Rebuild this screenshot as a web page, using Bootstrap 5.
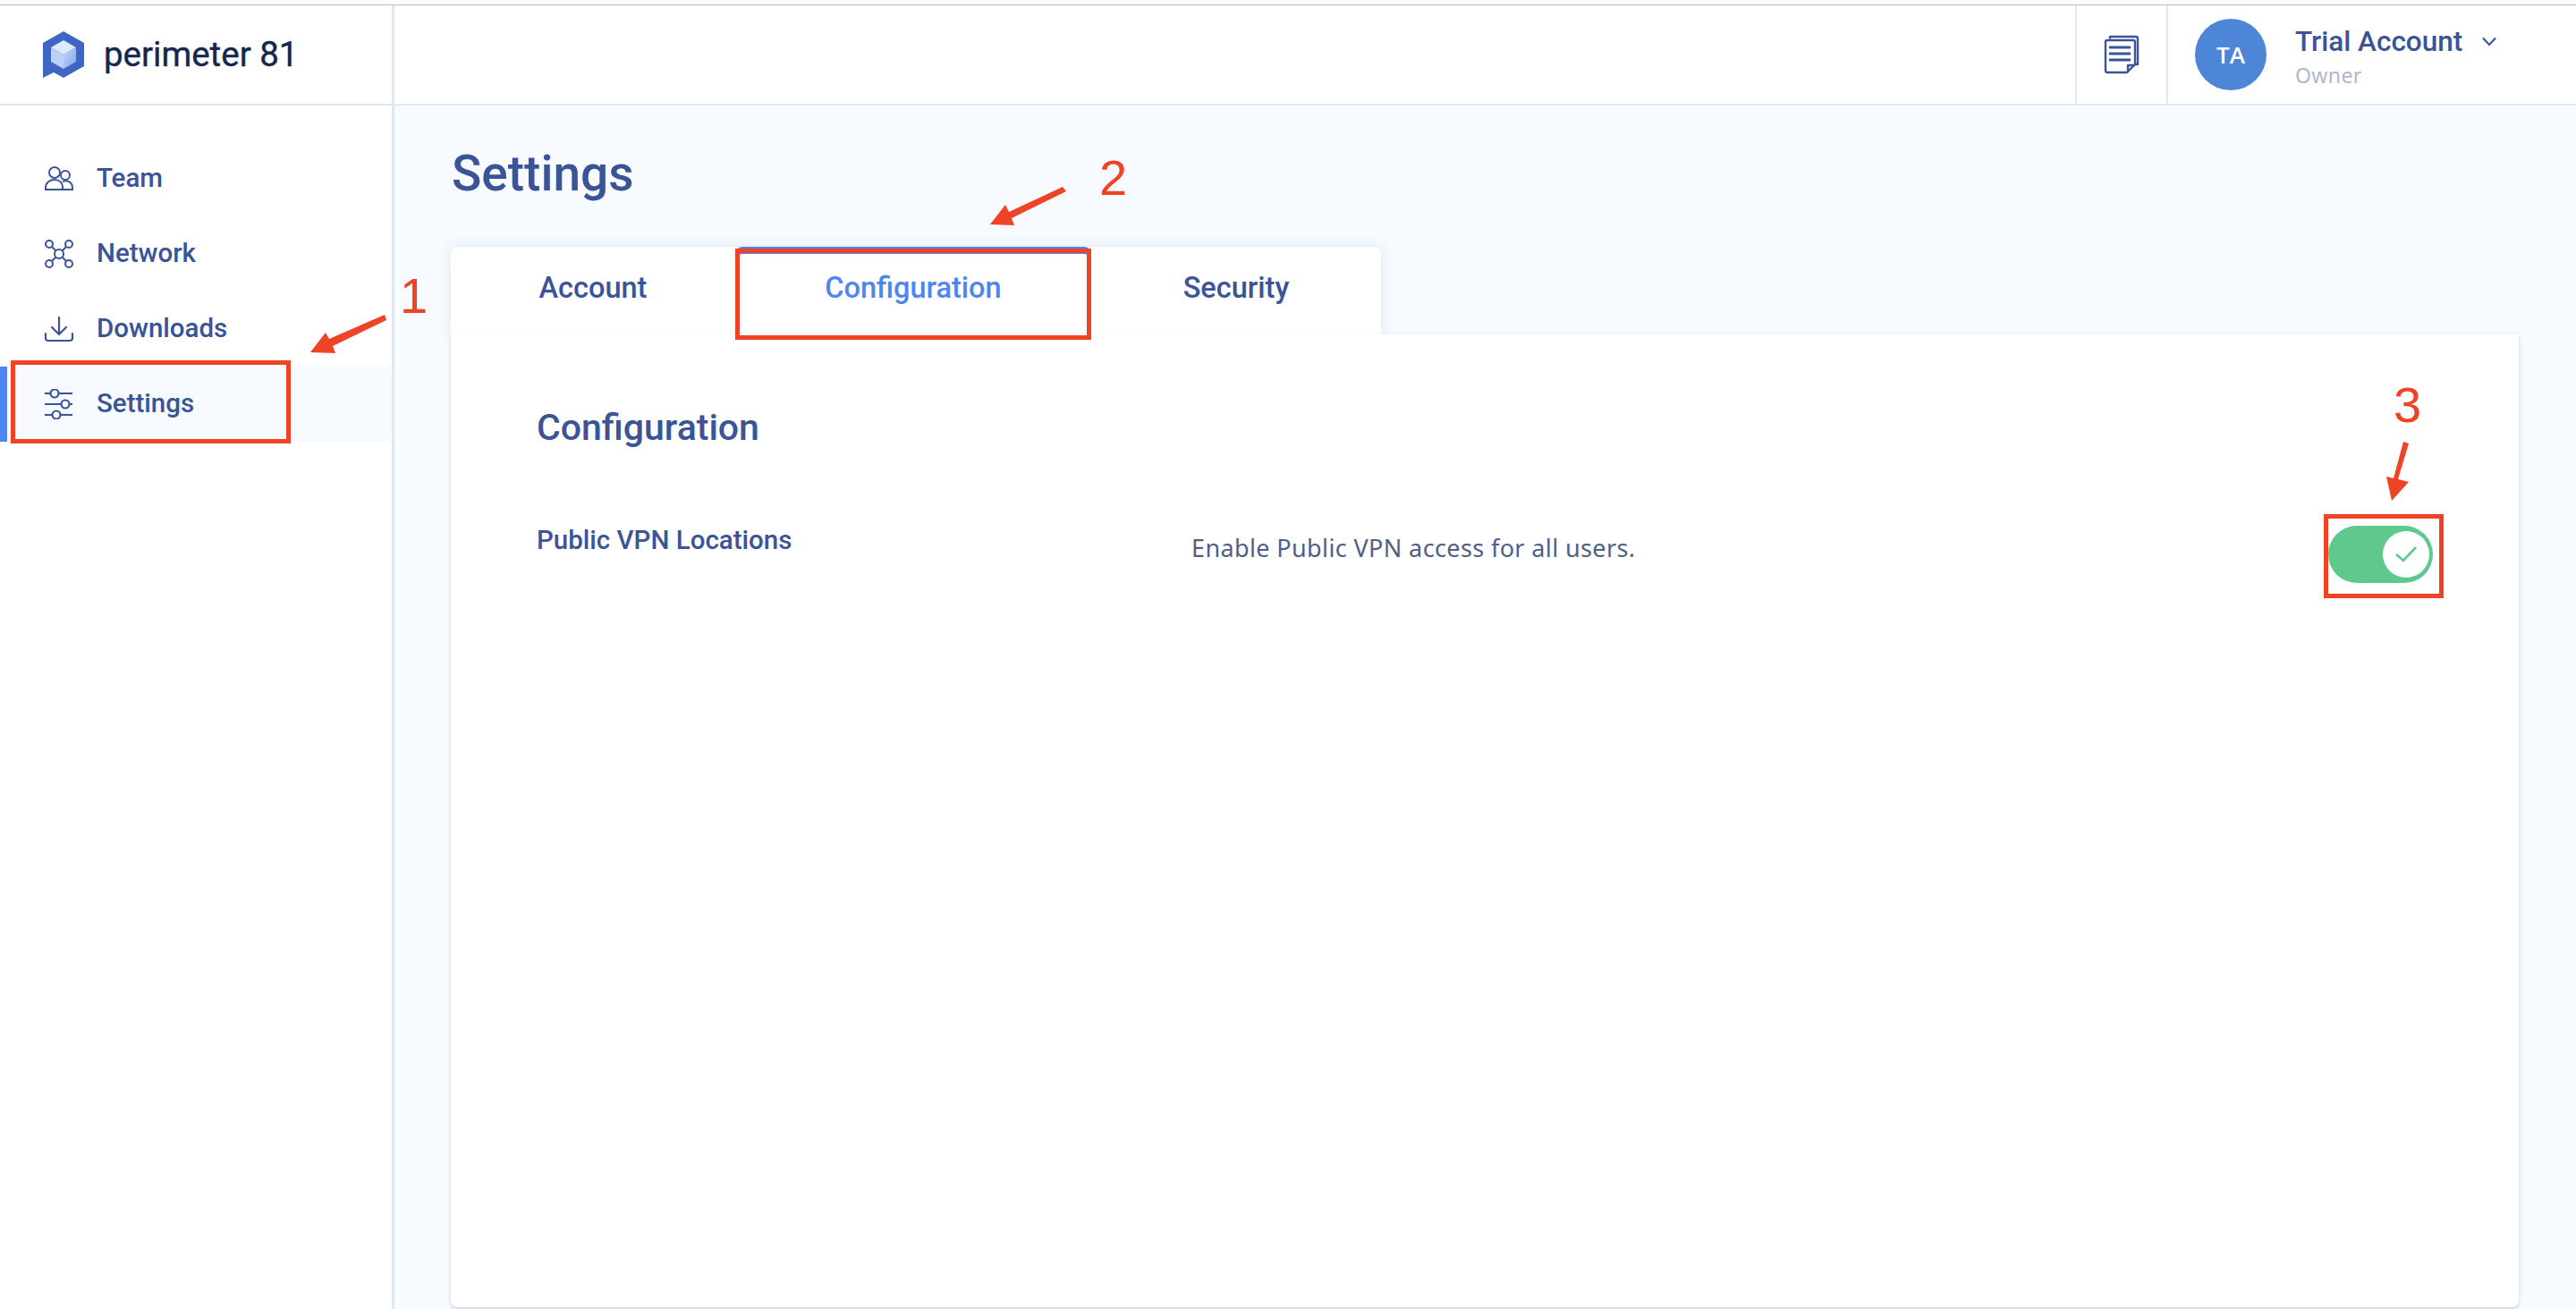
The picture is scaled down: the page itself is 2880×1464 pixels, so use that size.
<!DOCTYPE html>
<html lang="en">
<head>
<meta charset="utf-8">
<title>Settings</title>
<link href="https://cdn.jsdelivr.net/npm/bootstrap@5.3.0/dist/css/bootstrap.min.css" rel="stylesheet">
<style>
html,body{height:1464px;overflow:hidden;background:#f7faff;font-family:Roboto,"Liberation Sans",sans-serif;}
.shell{position:relative;height:1464px;padding-top:5px;background:#fff;}
.top-line{height:1px;background:#b8b8b8;}
.app-head{height:112px;background:#fff;border-bottom:2px solid #dfe7f3;}
.brand-cell{width:441px;padding-left:48px;border-right:3px solid #dfe7f3;gap:22px;}
.brand-name{font-size:38.500px;color:#14274e;line-height:1;-webkit-text-stroke:.4px #14274e;}
.doc-cell{width:104px;border-left:2px solid #dfe7f3;border-right:2px solid #dfe7f3;margin-left:auto;}
.user-cell{width:456px;padding-left:30px;gap:32px;}
.avatar-dot{width:80px;height:80px;background:#4e86d7;color:#fff;font:600 26px "Open Sans",sans-serif;}
.user-name{font-size:31.500px;font-weight:500;line-height:36px;color:#3a5497;gap:21px;}
.user-role{font:400 23px/32px "Noto Sans",sans-serif;color:#b0b8ca;letter-spacing:.4px;margin-top:3px;}
.user-text{padding-top:6px;}
.body-wrap{height:1346px;}
.side-col{width:441px;background:#fff;border-right:3px solid #dfe7f3;padding-top:40px;}
.side-link{height:84px;padding-left:49px;gap:25px;font-size:29.500px;font-weight:500;color:#3a5497;text-decoration:none;}
.side-link span{padding-bottom:1px;}
.side-link.on{background:#f7faff;box-shadow:inset 8px 0 0 #4d86f2;}
.main-col{padding:0 64px 2px 63px;background:#f7faff;min-width:0;}
.page-title{font-size:55px;font-weight:500;color:#3a5497;line-height:62px;margin:0;padding:45px 0 51px 1px;}
.tab-strip{width:1040px;background:#fff;border-radius:8px 8px 0 0;box-shadow:0 0 14px rgba(90,120,180,.14);flex-wrap:nowrap;}
.tab-item{height:98px;padding-bottom:6px;font-size:32.500px;font-weight:500;color:#3a5497;text-decoration:none;}
.tab-item.on{color:#4d86f2;box-shadow:inset 0 8px 0 #4d86f2;border-radius:8px 8px 0 0;}
.t1{width:318px}.t2{width:398px}.t3{width:324px}
.panel-box{position:relative;flex:1;background:#fff;border-radius:0 0 8px 8px;box-shadow:0 2px 4px rgba(90,120,180,.32);padding:78px 96px 0;}
.panel-head{font-size:41px;font-weight:500;color:#3a5497;line-height:52px;margin:0;}
.opt-row{margin-top:82px;}
.opt-name{width:732px;font-size:29.500px;font-weight:500;color:#3a5497;line-height:36px;}
.opt-desc{flex:1;font:400 27px/36px "Noto Sans",sans-serif;letter-spacing:.38px;color:#4f5f85;padding-top:9px;}
.pill-switch{width:117px;height:64px;border-radius:32px;background:#5fc88d;margin-top:2px;padding-right:4px;}
.pill-knob{width:52px;height:52px;background:#fff;}
.mark-box{position:absolute;border:5px solid #ee4325;pointer-events:none;}
.m1{left:12px;top:403px;width:313px;height:93px;}
.m2{left:822px;top:278px;width:398px;height:102px;}
.m3{left:2598px;top:575px;width:134px;height:94px;}
.mark-layer{position:absolute;left:0;top:0;width:2880px;height:1464px;pointer-events:none;}
.mark-layer text{font-family:"Liberation Sans",sans-serif;font-size:56px;fill:#ee4325;}
</style>
</head>
<body>
<div class="shell">
  <div class="top-line"></div>
  <header class="app-head d-flex">
    <div class="brand-cell d-flex align-items-center">
      <svg width="46" height="52" viewBox="0 0 46 52">
        <defs><linearGradient id="rf" x1="0" y1="0" x2="1" y2="1"><stop offset="0" stop-color="#c4d6f8"/><stop offset="1" stop-color="#7fa5ea"/></linearGradient></defs>
        <path d="M23 0 46 13V39L23 52 12 46 0 52V13Z" fill="#3f66c4"/>
        <path d="M23 10 37 18 23 26 9 18Z" fill="#dfe9fc"/>
        <path d="M9 18 23 26V42L9 34Z" fill="#bcd0f7"/>
        <path d="M37 18 23 26V42L37 34Z" fill="url(#rf)"/>
      </svg>
      <span class="brand-name">perimeter 81</span>
    </div>
    <div class="doc-cell d-flex align-items-center justify-content-center">
      <svg width="40" height="44" viewBox="0 0 40 44" fill="none" stroke="#3a5497" stroke-width="2.400" stroke-linecap="round" stroke-linejoin="round">
        <path d="M7 3.500V2H36Q38 2 38 4V33H35"/>
        <path d="M4 6H33Q35 6 35 8V33L26 42H4Q2 42 2 40V8Q2 6 4 6Z"/>
        <path d="M7 14H29M7 21H29M7 28H29" stroke-width="2.800"/>
        <path d="M27 41V34H34" />
      </svg>
    </div>
    <div class="user-cell d-flex align-items-center">
      <div class="avatar-dot rounded-circle d-flex align-items-center justify-content-center">TA</div>
      <div class="user-text">
        <div class="user-name d-flex align-items-center">Trial Account
          <svg width="18" height="11" viewBox="0 0 18 11" fill="none" stroke="#3a5497" stroke-width="2.200"><path d="M2 1.500 9 9 16 1.500"/></svg>
        </div>
        <div class="user-role">Owner</div>
      </div>
    </div>
  </header>
  <div class="body-wrap d-flex">
    <nav class="side-col flex-shrink-0 d-flex flex-column">
      <a class="side-link d-flex align-items-center" href="#">
        <svg width="34" height="30" viewBox="0 0 34 30" fill="none" stroke="#3a5497" stroke-width="2"><circle cx="12" cy="8" r="6"/><circle cx="24" cy="11" r="5"/><path d="M2 27V25C2 19 7 16 12 16S21 19 21 25V27H2ZM21 18C25 16 32 18 32 25V27H21"/></svg>
        <span>Team</span></a>
      <a class="side-link d-flex align-items-center" href="#">
        <svg width="34" height="32" viewBox="0 0 34 32" fill="none" stroke="#3a5497" stroke-width="2"><circle cx="17" cy="16" r="5"/><circle cx="6" cy="5" r="4"/><circle cx="28" cy="5" r="4"/><circle cx="6" cy="27" r="4"/><circle cx="28" cy="27" r="4"/><path d="M9 8 13.500 12.500M25 8 20.500 12.500M9 24 13.500 19.500M25 24 20.500 19.500"/></svg>
        <span>Network</span></a>
      <a class="side-link d-flex align-items-center" href="#">
        <svg width="34" height="30" viewBox="0 0 34 30" fill="none" stroke="#3a5497" stroke-width="2.200" stroke-linecap="round" stroke-linejoin="round"><path d="M17 2V20M9 13 17 21 25 13M2 20V25Q2 28 5 28H29Q32 28 32 25V20"/></svg>
        <span>Downloads</span></a>
      <a class="side-link on d-flex align-items-center" href="#">
        <svg width="34" height="34" viewBox="0 0 34 34" fill="none" stroke="#3a5497" stroke-width="2.200"><path d="M1 5H7M17 5H32M1 17H19M29 17H32M1 29H9M19 29H32"/><circle cx="12" cy="5" r="4.500"/><circle cx="24" cy="17" r="4.500"/><circle cx="14" cy="29" r="4.500"/></svg>
        <span>Settings</span></a>
    </nav>
    <main class="main-col flex-grow-1 d-flex flex-column">
      <h1 class="page-title">Settings</h1>
      <div class="tab-strip d-flex">
        <a class="tab-item t1 d-flex align-items-center justify-content-center" href="#">Account</a>
        <a class="tab-item t2 on d-flex align-items-center justify-content-center" href="#">Configuration</a>
        <a class="tab-item t3 d-flex align-items-center justify-content-center" href="#">Security</a>
      </div>
      <section class="panel-box">
        <h2 class="panel-head">Configuration</h2>
        <div class="opt-row d-flex align-items-start">
          <div class="opt-name">Public VPN Locations</div>
          <div class="opt-desc">Enable Public VPN access for all users.</div>
          <div class="pill-switch d-flex align-items-center justify-content-end">
            <div class="pill-knob rounded-circle d-flex align-items-center justify-content-center">
              <svg width="26" height="20" viewBox="0 0 26 20" fill="none" stroke="#5fc88d" stroke-width="2.600"><path d="M2 10 10 17 24 2"/></svg>
            </div>
          </div>
        </div>
      </section>
    </main>
  </div>

  <div class="mark-box m1"></div>
  <div class="mark-box m2"></div>
  <div class="mark-box m3"></div>
  <svg class="mark-layer" viewBox="0 0 2880 1464">
    <g fill="#ee4325" stroke="none">
      <path d="M430 352 432 358 372 387 375 395 347 394 364 372 368 379Z"/>
      <path d="M1188 209 1192 214 1131 244 1134 252 1107 251 1124 229 1128 237Z"/>
      <path d="M2687 494 2693 496 2681 536 2693 539 2674 560 2668 533 2676 535Z"/>
    </g>
    <text x="447" y="350">1</text>
    <text x="1229" y="218">2</text>
    <text x="2676" y="472">3</text>
  </svg>
</div>
<script src="https://cdn.jsdelivr.net/npm/bootstrap@5.3.0/dist/js/bootstrap.bundle.min.js"></script>
</body>
</html>
